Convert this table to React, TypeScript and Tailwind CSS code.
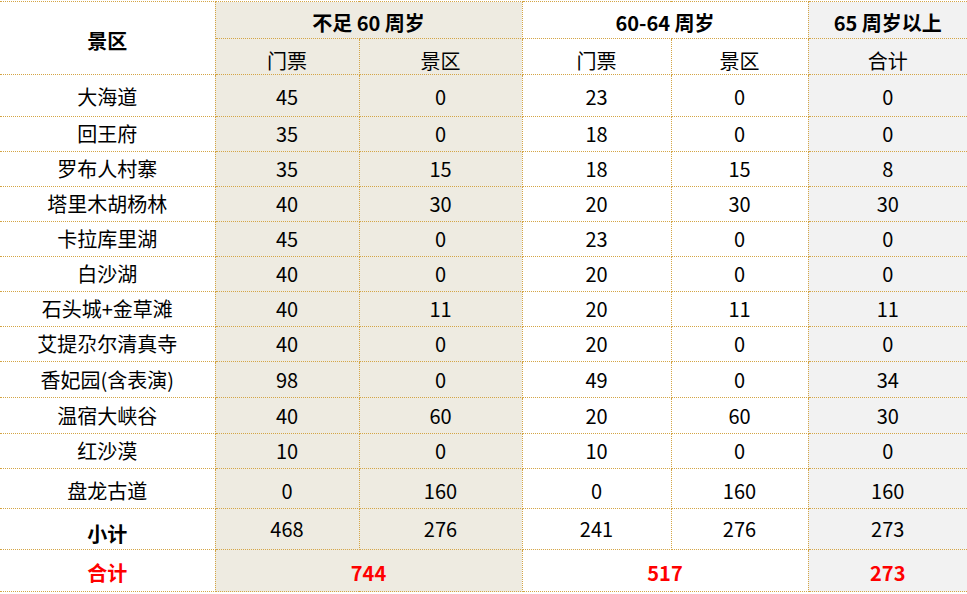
import React from 'react';

type Row = { name: string; v: (number | string)[]; h: string };

const rows: Row[] = [
  { name: '大海道', v: [45, 0, 23, 0, 0], h: 'h-[42px] pt-[2px]' },
  { name: '回王府', v: [35, 0, 18, 0, 0], h: 'h-[35px]' },
  { name: '罗布人村寨', v: [35, 15, 18, 15, 8], h: 'h-[35px]' },
  { name: '塔里木胡杨林', v: [40, 30, 20, 30, 30], h: 'h-[35px]' },
  { name: '卡拉库里湖', v: [45, 0, 23, 0, 0], h: 'h-[35px]' },
  { name: '白沙湖', v: [40, 0, 20, 0, 0], h: 'h-[35px]' },
  { name: '石头城+金草滩', v: [40, 11, 20, 11, 11], h: 'h-[35px]' },
  { name: '艾提尕尔清真寺', v: [40, 0, 20, 0, 0], h: 'h-[35px]' },
  { name: '香妃园(含表演)', v: [98, 0, 49, 0, 34], h: 'h-[36px] pt-[1px]' },
  { name: '温宿大峡谷', v: [40, 60, 20, 60, 30], h: 'h-[36px] pt-[1px]' },
  { name: '红沙漠', v: [10, 0, 10, 0, 0], h: 'h-[35px]' },
  { name: '盘龙古道', v: [0, 160, 0, 160, 160], h: 'h-[40px] pt-[5px]' },
];

const bd = 'border-[#d4a545] border-dotted';
const bgs = ['bg-[#eeebe1]', 'bg-[#eeebe1]', 'bg-white', 'bg-white', 'bg-[#f2f2f2]'];

export default function App() {
  return (
    <div className="w-[967px] h-[594px] bg-white overflow-hidden" style={{ fontFamily: '"Noto Sans CJK SC", "Noto Sans", sans-serif' }}>
      <table className="mt-px border-collapse text-[20px] text-black leading-none">
        <colgroup>
          <col className="w-[215px]" />
          <col className="w-[144px]" />
          <col className="w-[163px]" />
          <col className="w-[149px]" />
          <col className="w-[137px]" />
          <col className="w-[159px]" />
        </colgroup>
        <thead>
          <tr className="h-[37px]">
            <th rowSpan={2} className={`border-t border-b border-r ${bd} font-bold text-center pt-[6px]`}>景区</th>
            <th colSpan={2} className={`border ${bd} bg-[#eeebe1] font-bold pt-[5px]`}>不足 60 周岁</th>
            <th colSpan={2} className={`border ${bd} bg-white font-bold pt-[5px]`}>60-64 周岁</th>
            <th className={`border-t border-b border-l ${bd} bg-[#f2f2f2] font-bold pt-[5px]`}>65 周岁以上</th>
          </tr>
          <tr className="h-[36px]">
            <th className={`border ${bd} bg-[#eeebe1] font-normal pt-[8px]`}>门票</th>
            <th className={`border ${bd} bg-[#eeebe1] font-normal pt-[8px]`}>景区</th>
            <th className={`border ${bd} bg-white font-normal pt-[8px]`}>门票</th>
            <th className={`border ${bd} bg-white font-normal pt-[8px]`}>景区</th>
            <th className={`border-t border-b border-l ${bd} bg-[#f2f2f2] font-normal pt-[8px]`}>合计</th>
          </tr>
        </thead>
        <tbody>
          {rows.map((r) => (
            <tr key={r.name} className={r.h}>
              <td className={`border-t border-b border-r ${bd} text-center ${r.h}`}>{r.name}</td>
              {r.v.map((x, j) => (
                <td key={j} className={`${j === 4 ? 'border-t border-b border-l' : 'border'} ${bd} ${bgs[j]} text-center ${r.h}`}>{x}</td>
              ))}
            </tr>
          ))}
          <tr className="h-[41px]">
            <td className={`border-t border-b border-r ${bd} text-center font-bold pt-[10px]`}>小计</td>
            {[468, 276, 241, 276, 273].map((x, j) => (
              <td key={j} className={`${j === 4 ? 'border-t border-b border-l' : 'border'} ${bd} ${bgs[j]} text-center`}>{x}</td>
            ))}
          </tr>
          <tr className="h-[42px]">
            <td className={`border-t border-b border-r ${bd} text-center font-bold text-[#ff0000] pt-[5px]`}>合计</td>
            <td colSpan={2} className={`border ${bd} bg-[#eeebe1] text-center font-bold text-[#ff0000] pt-[5px]`}>744</td>
            <td colSpan={2} className={`border ${bd} bg-white text-center font-bold text-[#ff0000] pt-[5px]`}>517</td>
            <td className={`border-t border-b border-l ${bd} bg-[#f2f2f2] text-center font-bold text-[#ff0000] pt-[5px]`}>273</td>
          </tr>
        </tbody>
      </table>
    </div>
  );
}
